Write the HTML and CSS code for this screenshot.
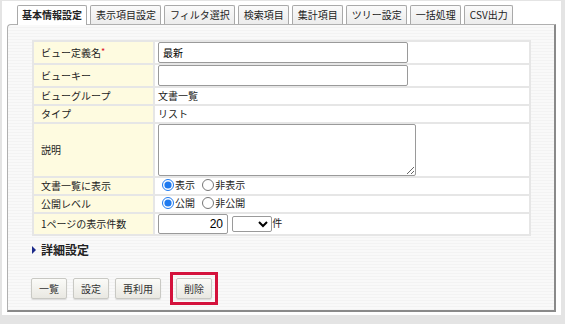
FILE: index.html
```html
<!DOCTYPE html>
<html lang="ja">
<head>
<meta charset="utf-8">
<title>ビュー定義</title>
<link rel="stylesheet" href="styles.css">
</head>
<body>
<div class="frame">

<ul class="tabs">
  <li class="tab active">基本情報設定</li>
  <li class="tab">表示項目設定</li>
  <li class="tab">フィルタ選択</li>
  <li class="tab">検索項目</li>
  <li class="tab">集計項目</li>
  <li class="tab">ツリー設定</li>
  <li class="tab">一括処理</li>
  <li class="tab">CSV出力</li>
</ul>

<div class="panel">
<form method="post">
<table class="form">
  <tr class="r-input">
    <th>ビュー定義名<span class="req">*</span></th>
    <td><input type="text" class="text" name="name" value="最新"></td>
  </tr>
  <tr class="r-input">
    <th>ビューキー</th>
    <td><input type="text" class="text" name="key" value=""></td>
  </tr>
  <tr class="r-plain">
    <th>ビューグループ</th>
    <td>文書一覧</td>
  </tr>
  <tr class="r-plain">
    <th>タイプ</th>
    <td>リスト</td>
  </tr>
  <tr class="r-area">
    <th>説明</th>
    <td><textarea name="description"></textarea></td>
  </tr>
  <tr class="r-plain">
    <th>文書一覧に表示</th>
    <td>
      <label class="opt"><input type="radio" name="show" checked>表示</label>
      <label class="opt"><input type="radio" name="show">非表示</label>
    </td>
  </tr>
  <tr class="r-plain">
    <th>公開レベル</th>
    <td>
      <label class="opt"><input type="radio" name="open" checked>公開</label>
      <label class="opt"><input type="radio" name="open">非公開</label>
    </td>
  </tr>
  <tr class="r-count">
    <th>1ページの表示件数</th>
    <td>
      <input type="text" class="count" name="count" value="20">
      <select class="unit" name="unit"><option></option></select>件
    </td>
  </tr>
</table>

<h3 class="detail">詳細設定</h3>

<div class="actions">
  <button type="button">一覧</button>
  <button type="button">設定</button>
  <button type="button">再利用</button>
  <span class="mark"><button type="button">削除</button></span>
</div>
</form>
</div>

</div>
</body>
</html>
```

FILE: styles.css
```css
html, body {
  margin: 0;
  background: #e4e4e4;
}

body {
  font: 10px/1.4 "Noto Sans CJK JP", "Noto Sans", sans-serif;
  color: #222;
}

.frame {
  background: #fff;
  margin: 1px 4px 0 2px;
  padding: 4px 5px 5px 5px;
  height: 314px;
  box-sizing: border-box;
}

/* Tabs */
.tabs {
  list-style: none;
  display: flex;
  gap: 3px;
  margin: 0 0 -1px 10px;
  padding: 0;
}

.tab {
  border: 1px solid #a9a9a9;
  border-bottom: 0;
  border-radius: 2px 2px 0 0;
  background: linear-gradient(#fafafa, #ececec);
  padding: 0 4px 0 5px;
  height: 18px;
  line-height: 17px;
  white-space: nowrap;
}

.tab.active {
  position: relative;
  z-index: 1;
  background: #fff;
  font-weight: bold;
  padding: 0 4px;
  height: 19px;
}

/* Panel */
.panel {
  border: 1px solid #b0b0b0;
  border-right: 2px solid #8a8a8a;
  border-bottom: 2px solid #8a8a8a;
  border-radius: 4px 0 0 0;
  background: repeating-linear-gradient(#f9f9f9 0, #f9f9f9 2px, #f3f3f3 2px, #f3f3f3 3px);
  padding: 15px 24px 0 24px;
  height: 288px;
  box-sizing: border-box;
}

.form {
  border-collapse: collapse;
  width: 499px;
  background: #fff;
}

.form th, .form td {
  border: 2px solid #e6e6e6;
  padding: 0;
  vertical-align: middle;
}

.form th {
  width: 112px;
  background: #fefbe0;
  font-weight: normal;
  text-align: left;
  padding-left: 7px;
}

.form td {
  padding-left: 3px;
}

.req {
  color: #e0102a;
  font-size: 9px;
  vertical-align: top;
}

.r-input th, .r-input td { height: 21px; }
.r-plain th, .r-plain td { height: 16px; }
.r-area th, .r-area td { height: 52px; }
.r-count th, .r-count td { height: 20px; }

.text {
  box-sizing: border-box;
  width: 250px;
  height: 21px;
  margin: 0;
  padding: 0 4px;
  border: 1px solid #9a9a9a;
  border-radius: 2px;
  font: inherit;
  display: block;
}

textarea {
  box-sizing: border-box;
  display: block;
  width: 258px;
  height: 52px;
  margin: 0;
  border: 1px solid #9a9a9a;
  border-radius: 2px;
  font: inherit;
}

.opt {
  display: inline-flex;
  align-items: center;
  margin-right: 1px;
}

.opt input {
  accent-color: #1f7aef;
  width: 12px;
  height: 12px;
  margin: 0 1px 0 4px;
}

.count {
  box-sizing: border-box;
  width: 70px;
  height: 20px;
  margin: 0;
  padding: 0 4px;
  border: 1px solid #9a9a9a;
  border-radius: 2px;
  font: 12px "Liberation Sans", sans-serif;
  text-align: right;
  vertical-align: middle;
}

.unit {
  box-sizing: border-box;
  width: 40px;
  height: 16px;
  margin: 0 0 0 2px;
  border: 1px solid #9a9a9a;
  border-radius: 2px;
  background: #fff;
  vertical-align: middle;
  font-size: 10px;
}

/* Detail link */
.detail {
  font-size: 12px;
  font-weight: bold;
  margin: 6px 0 0 0;
  line-height: 16px;
  display: flex;
  align-items: center;
}

.detail::before {
  content: "";
  border-left: 4px solid #1c2a8a;
  border-top: 4px solid transparent;
  border-bottom: 4px solid transparent;
  margin-right: 5px;
}

/* Buttons */
.actions {
  display: flex;
  align-items: center;
  gap: 6px;
  margin: 14px 0 0 -1px;
}

button {
  font: inherit;
  height: 21px;
  padding: 0 7px;
  border: 1px solid #c9c9c4;
  border-radius: 2px;
  background: linear-gradient(#fbfbf8, #e9e8e2);
  box-shadow: 0 1px 1px rgba(0, 0, 0, 0.12);
  color: #333;
  cursor: pointer;
}

.mark {
  border: 3px solid #d4123c;
  padding: 3px 3px 3px 3px;
  margin-left: 3px;
  display: flex;
}
```
